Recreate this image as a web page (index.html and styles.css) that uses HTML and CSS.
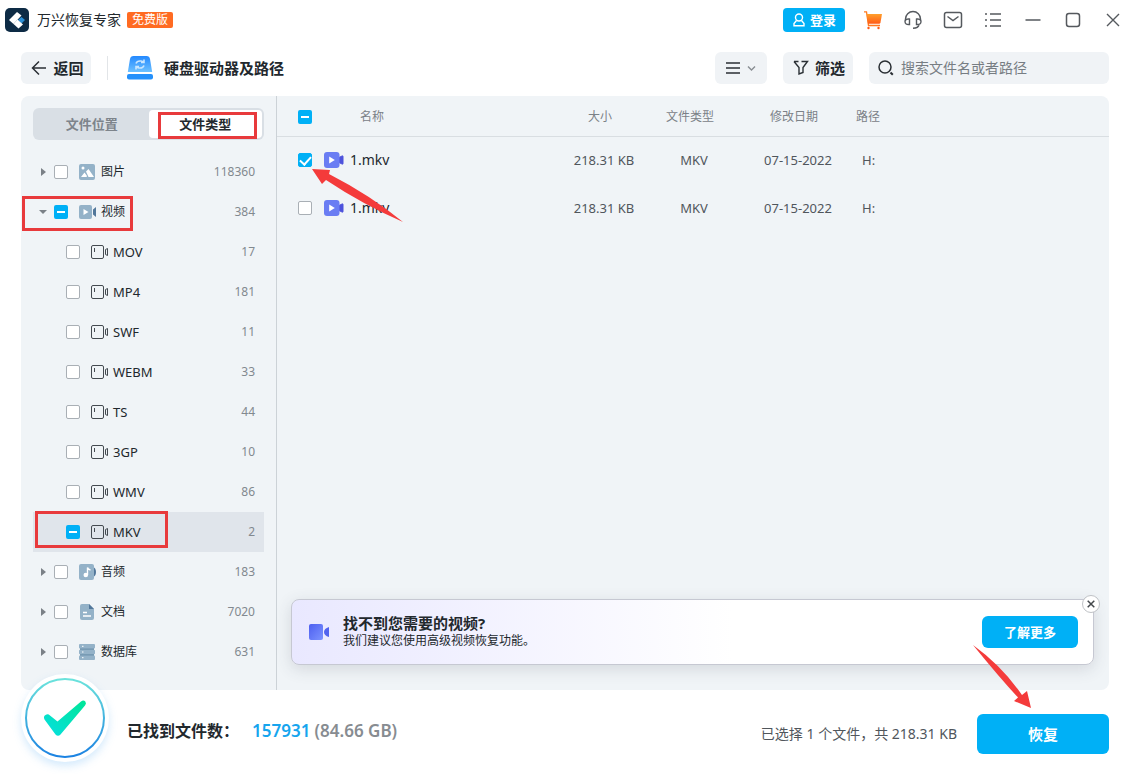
FILE: index.html
```html
<!DOCTYPE html>
<html lang="zh-CN">
<head>
<meta charset="utf-8">
<title>万兴恢复专家</title>
<link rel="stylesheet" href="styles.css">
</head>
<body>
<svg class="defs" width="0" height="0" aria-hidden="true">
  <defs>
    <linearGradient id="cartFill" x1="0" y1="0" x2="0" y2="1"><stop offset="0" stop-color="#ffa02c"/><stop offset="1" stop-color="#ff5a16"/></linearGradient>
    <linearGradient id="driveFill" x1="0" y1="0" x2="0" y2="1"><stop offset="0" stop-color="#2389ff"/><stop offset="1" stop-color="#6dc1ff"/></linearGradient>
    <linearGradient id="ringFill" x1="0" y1="0" x2="0" y2="1"><stop offset="0" stop-color="#6be3dc"/><stop offset="1" stop-color="#1b82e2"/></linearGradient>
    <linearGradient id="tickFill" x1="1" y1="0" x2="0" y2="1"><stop offset="0" stop-color="#00e696"/><stop offset="1" stop-color="#06dfe2"/></linearGradient>
    <linearGradient id="camFill" x1="0" y1="0" x2="1" y2="1"><stop offset="0" stop-color="#4d5ff0"/><stop offset="1" stop-color="#7c93ff"/></linearGradient>
  </defs>
  <symbol id="film" viewBox="0 0 18 16"><rect x=".5" y="1.500" width="12" height="13" rx="1.500" fill="none" stroke="#444a50"/><path d="M3.500 4v4M14.500 5.500l2-1v7l-2-1z" fill="none" stroke="#444a50"/></symbol>
  <symbol id="video" viewBox="0 0 20 16"><path d="M14 6 18 4q1-.5 1 .5v7q0 1-1 .5l-4-2z" fill="#4d52dc" stroke="#4d52dc"/><rect width="15.500" height="16" rx="3" fill="#6a7df3"/><path d="M5.200 4.500v7l5.600-3.500z" fill="#fff"/></symbol>
</svg>
<div class="app">
  <header class="titlebar">
    <svg class="logo" width="24" height="24" viewBox="0 0 24 24"><rect width="24" height="24" rx="5" fill="#0d2b45"/><path d="m4 12 8-8 4.500 3.500L8.500 16z" fill="#fff"/><path d="m13 12 3.500-3L20 12l-3.500 3.500z" fill="#2b8fd6"/><path d="m8.500 16 4-4.500 5.500 5-4.500 4z" fill="#fff"/></svg>
    <span class="app-name">万兴恢复专家</span>
    <span class="edition">免费版</span>
    <nav class="window-tools">
      <button class="login" type="button"><svg width="14" height="14" viewBox="0 0 14 14" fill="none" stroke="#fff" stroke-width="1.400"><circle cx="7" cy="4.500" r="3.500"/><path d="M4.500 7.500 2 10.500v2.300h10v-2.300L9.500 7.500"/></svg>登录</button>
      <button class="tool" type="button" aria-label="购物车"><svg width="20" height="20" viewBox="0 0 20 20"><path d="M1 1.800h2.500L5.500 15.500H17" fill="none" stroke="#ff7a1f" stroke-width="1.300"/><path d="M3.500 4H19l-1.500 8.500q-.3 1.300-1.500 1.300H5z" fill="url(#cartFill)"/><circle cx="5.500" cy="18" r="1.200" fill="#ff5a16"/><circle cx="15.500" cy="18" r="1.200" fill="#ff5a16"/></svg></button>
      <button class="tool" type="button" aria-label="客服"><svg width="20" height="20" viewBox="0 0 20 20" fill="none" stroke="#55595e" stroke-width="1.400"><path d="M2.500 11V9a7.500 7.500 0 0 1 15 0v2"/><path d="M6.500 9v5.500q-4.500.5-4.500-3 .3-3 4.500-2.500zM13.500 9v5.500q4.500.5 4.500-3-.3-3-4.500-2.500zM16 15q-.7 3-6 3.300"/></svg></button>
      <button class="tool" type="button" aria-label="邮件"><svg width="20" height="20" viewBox="0 0 20 20" fill="none" stroke="#55595e" stroke-width="1.500"><rect x="1.500" y="2.500" width="17" height="15" rx="2"/><path d="m4.500 6.500 5.500 4 5.500-4"/></svg></button>
      <button class="tool" type="button" aria-label="菜单"><svg width="20" height="20" viewBox="0 0 20 20" stroke="#55595e" stroke-width="1.500"><path d="M2 4h2M2 10h2M2 16h2M7 4h11M7 10h11M7 16h11"/></svg></button>
      <button class="tool" type="button" aria-label="最小化"><svg width="20" height="20" viewBox="0 0 20 20" stroke="#55595e" stroke-width="1.500"><path d="M2.500 10h15"/></svg></button>
      <button class="tool" type="button" aria-label="最大化"><svg width="20" height="20" viewBox="0 0 20 20" fill="none" stroke="#55595e" stroke-width="1.500"><rect x="3.500" y="3.500" width="13" height="13" rx="2.500"/></svg></button>
      <button class="tool" type="button" aria-label="关闭"><svg width="20" height="20" viewBox="0 0 20 20" stroke="#55595e" stroke-width="1.400"><path d="m4 4 12 12M16 4 4 16"/></svg></button>
    </nav>
  </header>

  <div class="toolbar">
    <button class="soft back" type="button"><svg width="16" height="16" viewBox="0 0 16 16" fill="none" stroke="#2a2f34" stroke-width="1.500"><path d="M15 8H2M8 1.500 1.500 8 8 14.500"/></svg>返回</button>
    <span class="split"></span>
    <svg width="26" height="24" viewBox="0 0 26 24"><path d="M6.500 0h13q3 0 3.500 3l2.200 13H.8L3 3q.5-3 3.500-3z" fill="url(#driveFill)"/><rect y="18" width="26" height="5.500" rx="2" fill="#2490fb"/><path d="M9 7.500q1-3 5-2.500l3 1M17 3.500v3h-3M17 9.500q-1 3-5 2.500l-3-1M9 13.500v-3h3" fill="none" stroke="#c9e6ff" stroke-width="1.600"/></svg>
    <h1 class="title">硬盘驱动器及路径</h1>
    <div class="toolbar-end">
      <button class="soft view" type="button" aria-label="视图"><svg width="32" height="16" viewBox="0 0 32 16" fill="none"><path d="M1 3h14M1 8h14M1 13h14" stroke="#2a2f34" stroke-width="1.700"/><path d="m23 6.500 3.500 3.500L30 6.500" stroke="#888d92" stroke-width="1.400"/></svg></button>
      <button class="soft filter" type="button"><svg width="16" height="16" viewBox="0 0 16 16" fill="none" stroke="#2a2f34" stroke-width="1.400"><path d="M1 1.500h4.500M1 1.500l5 6v6.500l4-1.500v-5l4.500-6H8.500"/></svg>筛选</button>
      <label class="soft search"><svg width="18" height="18" viewBox="0 0 18 18" fill="none" stroke="#2a2f34" stroke-width="1.500"><circle cx="8" cy="8" r="6"/><path d="m13.500 13.500 2.300 2.300" stroke-width="2"/></svg><input type="text" placeholder="搜索文件名或者路径" aria-label="搜索文件名或者路径"></label>
    </div>
  </div>

  <main class="workspace">
    <aside class="sidebar">
      <div class="tabs">
        <button class="tab" type="button">文件位置</button>
        <button class="tab active marked" type="button">文件类型</button>
      </div>
      <ul class="tree">
        <li class="row"><i class="caret"></i><input class="check" type="checkbox" id="t1"><label for="t1"><svg width="17" height="16" viewBox="0 0 17 16"><rect width="16" height="16" rx="2" fill="#94b2c8"/><circle cx="4" cy="4" r="1.500" fill="#fff"/><path d="m2 13 3.500-4.500L8 12l-.5 1zM7 7.500 9.500 5l5.500 8H9.500z" fill="#fff"/></svg>图片</label><span class="count">118360</span></li>
        <li class="row marked video-mark"><i class="caret open"></i><input class="check mixed" type="checkbox" id="t2"><label for="t2"><svg width="17" height="16" viewBox="0 0 17 16"><rect y="1" width="13" height="14" rx="2" fill="#94b2c8"/><path d="M14 5.500 17 3v10l-3-2.500z" fill="#52779a"/><path d="M4.500 5v6l5-3z" fill="#fff"/></svg>视频</label><span class="count">384</span></li>
        <li class="row child"><input class="check" type="checkbox" id="c1"><label for="c1"><svg width="18" height="16"><use href="#film"/></svg>MOV</label><span class="count">17</span></li>
        <li class="row child"><input class="check" type="checkbox" id="c2"><label for="c2"><svg width="18" height="16"><use href="#film"/></svg>MP4</label><span class="count">181</span></li>
        <li class="row child"><input class="check" type="checkbox" id="c3"><label for="c3"><svg width="18" height="16"><use href="#film"/></svg>SWF</label><span class="count">11</span></li>
        <li class="row child"><input class="check" type="checkbox" id="c4"><label for="c4"><svg width="18" height="16"><use href="#film"/></svg>WEBM</label><span class="count">33</span></li>
        <li class="row child"><input class="check" type="checkbox" id="c5"><label for="c5"><svg width="18" height="16"><use href="#film"/></svg>TS</label><span class="count">44</span></li>
        <li class="row child"><input class="check" type="checkbox" id="c6"><label for="c6"><svg width="18" height="16"><use href="#film"/></svg>3GP</label><span class="count">10</span></li>
        <li class="row child"><input class="check" type="checkbox" id="c7"><label for="c7"><svg width="18" height="16"><use href="#film"/></svg>WMV</label><span class="count">86</span></li>
        <li class="row child selected marked mkv-mark"><input class="check mixed" type="checkbox" id="c8"><label for="c8"><svg width="18" height="16"><use href="#film"/></svg>MKV</label><span class="count">2</span></li>
        <li class="row"><i class="caret"></i><input class="check" type="checkbox" id="t3"><label for="t3"><svg width="17" height="16" viewBox="0 0 17 16"><path d="M14 3q3 1 3 5t-3 5z" fill="#52779a"/><rect width="15" height="16" rx="2" fill="#94b2c8"/><path d="M8.500 11V3.500q.5 2 3 2.500" fill="none" stroke="#fff" stroke-width="1.400"/><circle cx="6.800" cy="11" r="2.300" fill="#fff"/></svg>音频</label><span class="count">183</span></li>
        <li class="row"><i class="caret"></i><input class="check" type="checkbox" id="t4"><label for="t4"><svg width="17" height="16" viewBox="0 0 17 16"><path d="M3 0h7l5 5v9q0 2-2 2H3q-2 0-2-2V2q0-2 2-2z" fill="#94b2c8"/><path d="M10 0v5h5z" fill="#52779a"/><path d="M4 8.500h4M4 12h8" stroke="#fff" stroke-width="1.500"/></svg>文档</label><span class="count">7020</span></li>
        <li class="row"><i class="caret"></i><input class="check" type="checkbox" id="t5"><label for="t5"><svg width="17" height="16" viewBox="0 0 17 16"><path d="M1 0h14v16H1z" fill="#6f93ae"/><rect width="16" height="4.600" rx="1" fill="#94b2c8"/><rect y="5.700" width="16" height="4.600" rx="1" fill="#94b2c8"/><rect y="11.400" width="16" height="4.600" rx="1" fill="#94b2c8"/><path d="M3 2.300h1.500M3 8h1.500M3 13.700h1.500" stroke="#fff"/></svg>数据库</label><span class="count">631</span></li>
      </ul>
    </aside>

    <section class="content">
      <table class="files">
        <colgroup><col class="w-check"><col class="w-name"><col class="w-size"><col class="w-type"><col class="w-date"><col></colgroup>
        <thead><tr><th><input class="check mixed" type="checkbox" aria-label="全选"></th><th class="name-head">名称</th><th class="mid">大小</th><th class="mid">文件类型</th><th class="mid">修改日期</th><th>路径</th></tr></thead>
        <tbody>
          <tr><td><input class="check" type="checkbox" id="f1" checked></td><td><label class="file" for="f1"><svg width="20" height="16"><use href="#video"/></svg>1.mkv</label></td><td class="mid">218.31 KB</td><td class="mid">MKV</td><td class="mid">07-15-2022</td><td class="path">H:</td></tr>
          <tr><td><input class="check" type="checkbox" id="f2"></td><td><label class="file" for="f2"><svg width="20" height="16"><use href="#video"/></svg>1.mkv</label></td><td class="mid">218.31 KB</td><td class="mid">MKV</td><td class="mid">07-15-2022</td><td class="path">H:</td></tr>
        </tbody>
      </table>
      <svg class="arrow arrow-check" width="92" height="54" viewBox="0 0 92 54"><path d="M0 0 18 1 17 5Q58 26 91 53 50 35 14 11L10 15z" fill="#f43b3b"/></svg>
      <div class="banner">
        <svg width="20" height="16" viewBox="0 0 20 16"><rect width="14" height="16" rx="2" fill="url(#camFill)"/><path d="M20 3v10q-5-1.500-5-5t5-5z" fill="#5263ee"/></svg>
        <div class="banner-text"><strong>找不到您需要的视频?</strong><span>我们建议您使用高级视频恢复功能。</span></div>
        <button class="primary more" type="button">了解更多</button>
        <button class="close" type="button" aria-label="关闭提示"><svg width="8" height="8" viewBox="0 0 8 8" stroke="#44484c" stroke-width="1.500"><path d="m.7.7 6.600 6.600M7.300.7.7 7.300"/></svg></button>
      </div>
    </section>
  </main>

  <footer class="status">
    <svg class="done" width="100" height="100" viewBox="0 0 100 100"><circle cx="50" cy="50" r="44" fill="#fff"/><circle cx="50" cy="50" r="39" fill="#fff" stroke="url(#ringFill)" stroke-width="2"/><path d="M29.500 51.500q-1.500-3 1-4.500 2.500-1.500 4.500.5l7.500 6L66 33.500q2.500-2 4.300 0 1.500 1.800-.3 4L45.500 66.500q-2.500 2.500-5 0z" fill="url(#tickFill)"/></svg>
    <p class="found">已找到文件数：<span class="number">157931</span> <span class="size">(84.66 GB)</span></p>
    <p class="picked">已选择 1 个文件，共 218.31 KB</p>
    <button class="primary recover" type="button">恢复</button>
    <svg class="arrow arrow-recover" width="58" height="64" viewBox="0 0 58 64"><path d="M0 0Q29 21 49 50L54 46 58 63 41 56 45 52.500Q26 32 0 0z" fill="#f43b3b"/></svg>
  </footer>
</div>
</body>
</html>
```
FILE: styles.css
```css
* { box-sizing: border-box; }
body {
  margin: 0;
  background: #fff;
  color: #22282d;
  font: 13px/20px "Noto Sans", "Noto Sans CJK SC", sans-serif;
}
button, input { font: inherit; color: inherit; }
button { border: 0; padding: 0; background: none; display: flex; align-items: center; justify-content: center; cursor: pointer; }
svg { flex: none; display: block; }
p, h1, ul { margin: 0; padding: 0; }
.defs { position: absolute; }
.app { min-height: 100vh; display: flex; flex-direction: column; }

.titlebar { height: 40px; padding: 0 5px; display: flex; align-items: center; }
.app-name { margin: 0 6px 0 8px; font-size: 14px; }
.edition { padding: 0 5px; border-radius: 2px; background: #ff6b22; color: #fff; font-size: 12px; line-height: 16px; }
.window-tools { margin-left: auto; display: flex; align-items: center; gap: 20px; }
.tool { width: 20px; height: 20px; }
.login { width: 62px; height: 24px; margin-right: -2px; gap: 4px; border-radius: 4px; background: #00b0f6; color: #fff; font-size: 13px; font-weight: 700; }

.toolbar { height: 56px; padding: 0 19px 0 21px; display: flex; align-items: center; }
.soft { height: 32px; border-radius: 6px; background: #f0f3f6; font-size: 15px; font-weight: 700; display: flex; align-items: center; }
.back { width: 70px; padding-left: 3px; gap: 6px; }
.split { width: 1px; height: 24px; margin: 0 19px 0 16px; background: #e2e5e8; }
.title { margin-left: 11px; font-size: 15px; line-height: 24px; }
.toolbar-end { margin-left: auto; display: flex; gap: 16px; }
.view { width: 52px; }
.filter { width: 70px; padding-left: 2px; gap: 6px; }
.search { width: 240px; padding: 0 8px; gap: 6px; font-weight: 400; }
.search input { flex: 1; min-width: 0; border: 0; padding: 0; outline: 0; background: none; font-size: 14px; }
.search input::placeholder { color: #777d83; opacity: 1; }

.workspace { flex: 1; margin: 0 19px 0 21px; display: flex; border-radius: 8px; background: #f0f4f7; }
.sidebar { width: 256px; padding: 12px 12px 0; border-right: 1px solid #ccd2d7; }
.tabs { height: 32px; padding: 2px; display: flex; border-radius: 6px; background: #d9dfe5; }
.tab { flex: 1; border-radius: 4px; color: #7d848b; font-weight: 700; }
.tab.active { background: #fff; color: #22282d; }
.marked { position: relative; }
.marked::after { content: ""; position: absolute; border: 3px solid #e83a3c; pointer-events: none; }
.tab.marked::after { inset: 2px 5px -1px 9px; }
.video-mark::after { inset: 4px 131px 1px -11px; }
.mkv-mark::after { inset: -1px 96px 4px 2px; }

.tree { margin-top: 12px; list-style: none; }
.row { height: 40px; padding: 0 9px 0 8px; display: flex; align-items: center; }
.row label { margin-left: 11px; display: flex; align-items: center; gap: 5px; font-size: 12px; }
.row.child { padding-left: 33px; }
.row.child label { gap: 4px; font-size: 13px; }
.row.selected { background: #e0e5eb; }
.count { margin-left: auto; color: #82898f; font-size: 12px; }
.caret { width: 5px; margin-right: 8px; border: solid transparent; border-width: 4px 0 4px 5px; border-left-color: #7b8187; }
.caret.open { width: 8px; margin: 0 7px 0 -2px; border-width: 4px 4px 0; border-color: #7b8187 transparent; }
.check { appearance: none; flex: none; display: block; width: 14px; height: 14px; margin: 0; border: 1px solid #a9afb5; border-radius: 2px; background: #fff; }
.check.mixed { border: 6px solid #00b0f6; border-width: 6px 3px; }
.check:checked { border-color: #00b0f6; background: #00b0f6; }
.check:checked::after { content: ""; display: block; width: 5px; height: 9px; margin: 0 auto; border: solid #fff; border-width: 0 2px 2px 0; transform: rotate(42deg); }

.content { flex: 1; min-width: 0; position: relative; display: flex; flex-direction: column; }
.files { width: 100%; table-layout: fixed; border-collapse: separate; border-spacing: 0; color: #50565c; }
.files th, .files td { padding: 0; text-align: left; }
.files th { height: 41px; padding-top: 2px; border-bottom: 1px solid #d9dee2; color: #7b8187; font-size: 12px; font-weight: 400; }
.files td { height: 48px; padding-bottom: 2px; }
.files th:first-child, .files td:first-child { padding-left: 21px; }
.files td.mid { text-align: center; }
.files th.mid { padding-right: 8px; text-align: center; }
.files .name-head { padding-left: 36px; }
.files .path { padding-left: 6px; }
.w-check { width: 47px; }
.w-name { width: 236px; }
.w-size { width: 88px; }
.w-type { width: 92px; }
.w-date { width: 116px; }
.file { display: flex; align-items: center; gap: 6px; color: #22282d; font-size: 14px; }

.banner { position: relative; height: 66px; margin: auto 15px 25px 14px; padding: 0 15px 0 17px; display: flex; align-items: center; border: 1px solid #c6c8d2; border-radius: 8px; background: linear-gradient(90deg, #e9e8ff, #fff 55%); box-shadow: 0 4px 16px rgba(60, 70, 90, .16); }
.banner-text { margin-left: 14px; display: flex; flex-direction: column; font-size: 12px; line-height: 18px; }
.banner-text strong { font-size: 15px; }
.primary { border-radius: 6px; background: #00b0f6; color: #fff; font-weight: 700; }
.more { width: 96px; height: 32px; margin-left: auto; }
.close { position: absolute; top: -5px; right: -7px; width: 18px; height: 18px; border: 1px solid #bfc2c6; border-radius: 50%; background: #fff; }

.status { position: relative; height: 84px; padding: 4px 19px 0 127px; display: flex; align-items: center; }
.done { position: absolute; left: 15px; top: -22px; filter: drop-shadow(0 4px 4px rgba(40, 150, 240, .2)); }
.found { padding-bottom: 6px; font-size: 16px; font-weight: 600; }
.number { margin-left: 13px; color: #16a5ee; font-size: 17px; }
.size { color: #878c91; font-size: 17px; }
.picked { margin-left: auto; color: #50565c; font-size: 14px; }
.recover { width: 132px; height: 40px; margin-left: 20px; font-size: 15px; }
.arrow { position: absolute; pointer-events: none; }
.arrow-check { left: 35px; top: 73px; }
.arrow-recover { right: 97px; top: -45px; }
```
